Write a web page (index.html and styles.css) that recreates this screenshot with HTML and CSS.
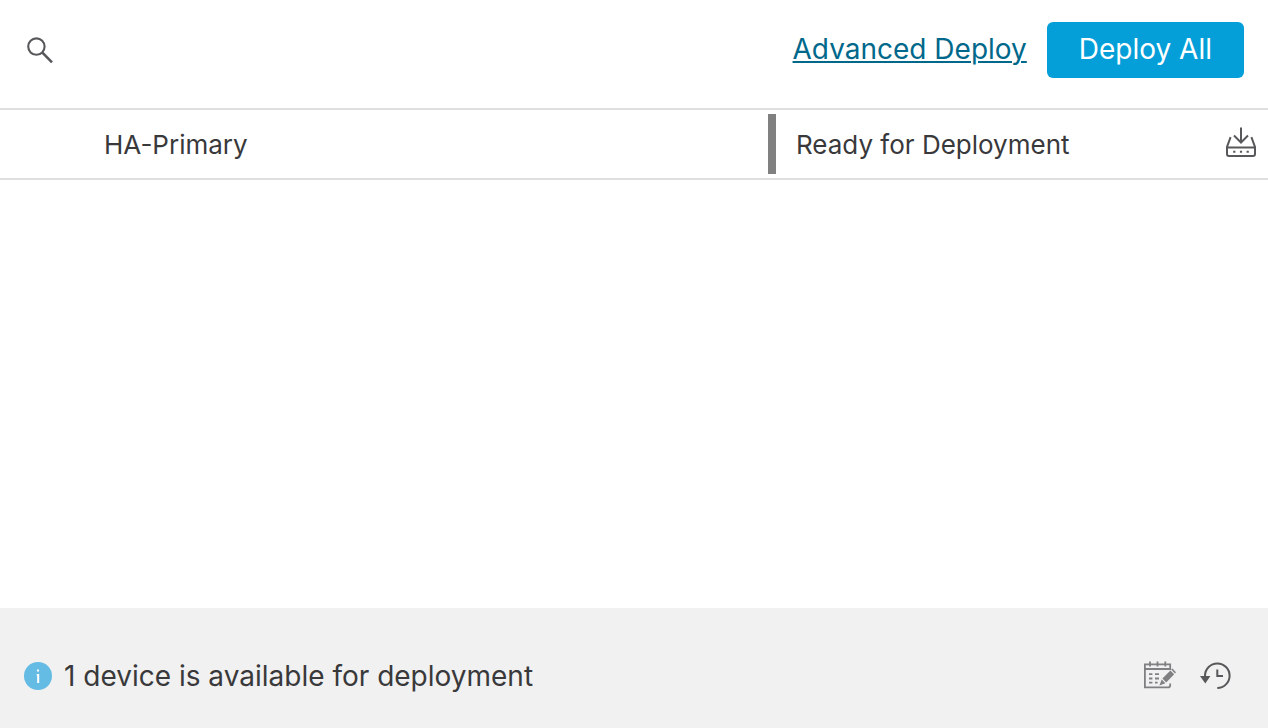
FILE: index.html
```html
<!DOCTYPE html>
<html lang="en">
<head>
<meta charset="utf-8">
<meta name="viewport" content="width=device-width, initial-scale=1">
<title>Deploy</title>
<link rel="stylesheet" href="styles.css">
</head>
<body>
<main class="panel">
  <header class="toolbar">
    <button class="icon-button" type="button" aria-label="Search">
      <svg width="32" height="30" viewBox="0 0 32 30" fill="none" stroke="#58585b">
        <circle cx="12.4" cy="11.6" r="8.2" stroke-width="2.1"/>
        <path d="M18.4 17.6L28 27.3" stroke-width="2.6"/>
      </svg>
    </button>
    <div class="actions">
      <a class="advanced" href="#advanced">Advanced Deploy</a>
      <button class="deploy-all" type="button">Deploy All</button>
    </div>
  </header>
  <table class="devices">
    <tbody>
      <tr>
        <td class="name">HA-Primary</td>
        <td class="state">
          <div class="status">
            <span class="status-text">Ready for Deployment</span>
            <button class="icon-button" type="button" aria-label="Deploy device">
              <svg width="32" height="36" viewBox="0 0 32 36" fill="none" stroke="#58585b" stroke-width="2">
                <path d="M16 1.5V16M9 9.5L16 16.5L23 9.5"/>
                <path d="M5.6 11.2L2 21V28Q2 30 4 30H28Q30 30 30 28V21L26.4 11.2M2 21.5H30"/>
                <path d="M8.2 25.8H10.4M14.9 25.8H17.1M21.6 25.8H23.8"/>
              </svg>
            </button>
          </div>
        </td>
      </tr>
    </tbody>
  </table>
  <footer class="footer">
    <svg class="info" width="28" height="28" viewBox="0 0 28 28" aria-hidden="true">
      <circle cx="14" cy="14" r="14" fill="#64bbe3"/>
      <path d="M13 7.6H15V9.4H13ZM12.7 12H15.2V21H13.2V13.4H12.7Z" fill="#fff"/>
    </svg>
    <p class="message">1 device is available for deployment</p>
    <button class="icon-button" type="button" aria-label="Scheduled deployments">
      <svg width="33" height="32" viewBox="0 0 33 32" fill="none" stroke="#808083" stroke-width="1.8">
        <path d="M27.2 10V4.4H1.9V27.4H25Q27.2 27.4 27.2 25.2V23.5M1.9 9H27.2"/>
        <path d="M7 1.6V6.4M14.5 1.6V6.4M22.3 1.6V6.4" stroke-width="1.8"/>
        <path d="M6 14.2H9.4M12 14.2H16M6 18.5H9.4M12 18.5H16M6 22.6H9.4M12 22.6H14.6"/>
        <path d="M19.4 18.6L27.4 10.4L31.2 14.2L23.2 22.4ZM28.2 9.6L29.4 8.6L33 12.2L32 13.4ZM18.7 19.4L22.4 23.2L16.4 25.4Z" fill="#808083" stroke="none"/>
      </svg>
    </button>
    <button class="icon-button history" type="button" aria-label="Deployment history">
      <svg width="32" height="32" viewBox="0 0 32 32" fill="none" stroke="#58585b" stroke-width="2">
        <path d="M5 17V15.6A12.3 12.3 0 1 1 17.3 28"/>
        <path d="M17.3 9.5V16H23"/>
        <path d="M0 16H10.4L5.3 23.5Z" fill="#58585b" stroke="none"/>
      </svg>
    </button>
  </footer>
</main>
</body>
</html>
```
FILE: styles.css
```css
* {
  box-sizing: border-box;
}

body {
  margin: 0;
  background: #fff;
  color: #39393b;
  font-family: Inter, "Liberation Sans", sans-serif;
  font-size: 28px;
}

svg {
  display: block;
}

.panel {
  display: flex;
  flex-direction: column;
  min-height: 100vh;
}

.icon-button {
  flex: none;
  padding: 0;
  border: 0;
  background: none;
  cursor: pointer;
}

.toolbar {
  display: flex;
  align-items: center;
  justify-content: space-between;
  padding: 22px 24px 30px;
}

.actions {
  display: flex;
  align-items: baseline;
  gap: 20px;
}

.advanced {
  color: #00688b;
  text-decoration-thickness: 2px;
  text-underline-offset: 2px;
}

.deploy-all {
  padding: 9px 32px 11px;
  border: 0;
  border-radius: 6px;
  background: #049fd9;
  color: #fff;
  font: inherit;
  line-height: 36px;
  cursor: pointer;
}

.devices {
  width: 100%;
  table-layout: fixed;
  border-spacing: 0;
  border-top: 2px solid #dfdfdf;
  border-bottom: 2px solid #dfdfdf;
  font-size: 26px;
}

.name {
  padding: 4px 0 4px 104px;
}

.state {
  width: 500px;
  padding: 4px 0;
}

.status {
  display: flex;
  align-items: center;
  justify-content: space-between;
  min-height: 60px;
  padding: 0 11px 0 20px;
  border-left: 8px solid #808080;
}

.footer {
  display: flex;
  align-items: center;
  min-height: 120px;
  margin-top: auto;
  padding: 16px 36px 0 24px;
  background: #f1f1f1;
}

.message {
  flex: 1;
  margin: 0 12px;
}

.history {
  margin-left: 24px;
}
```
